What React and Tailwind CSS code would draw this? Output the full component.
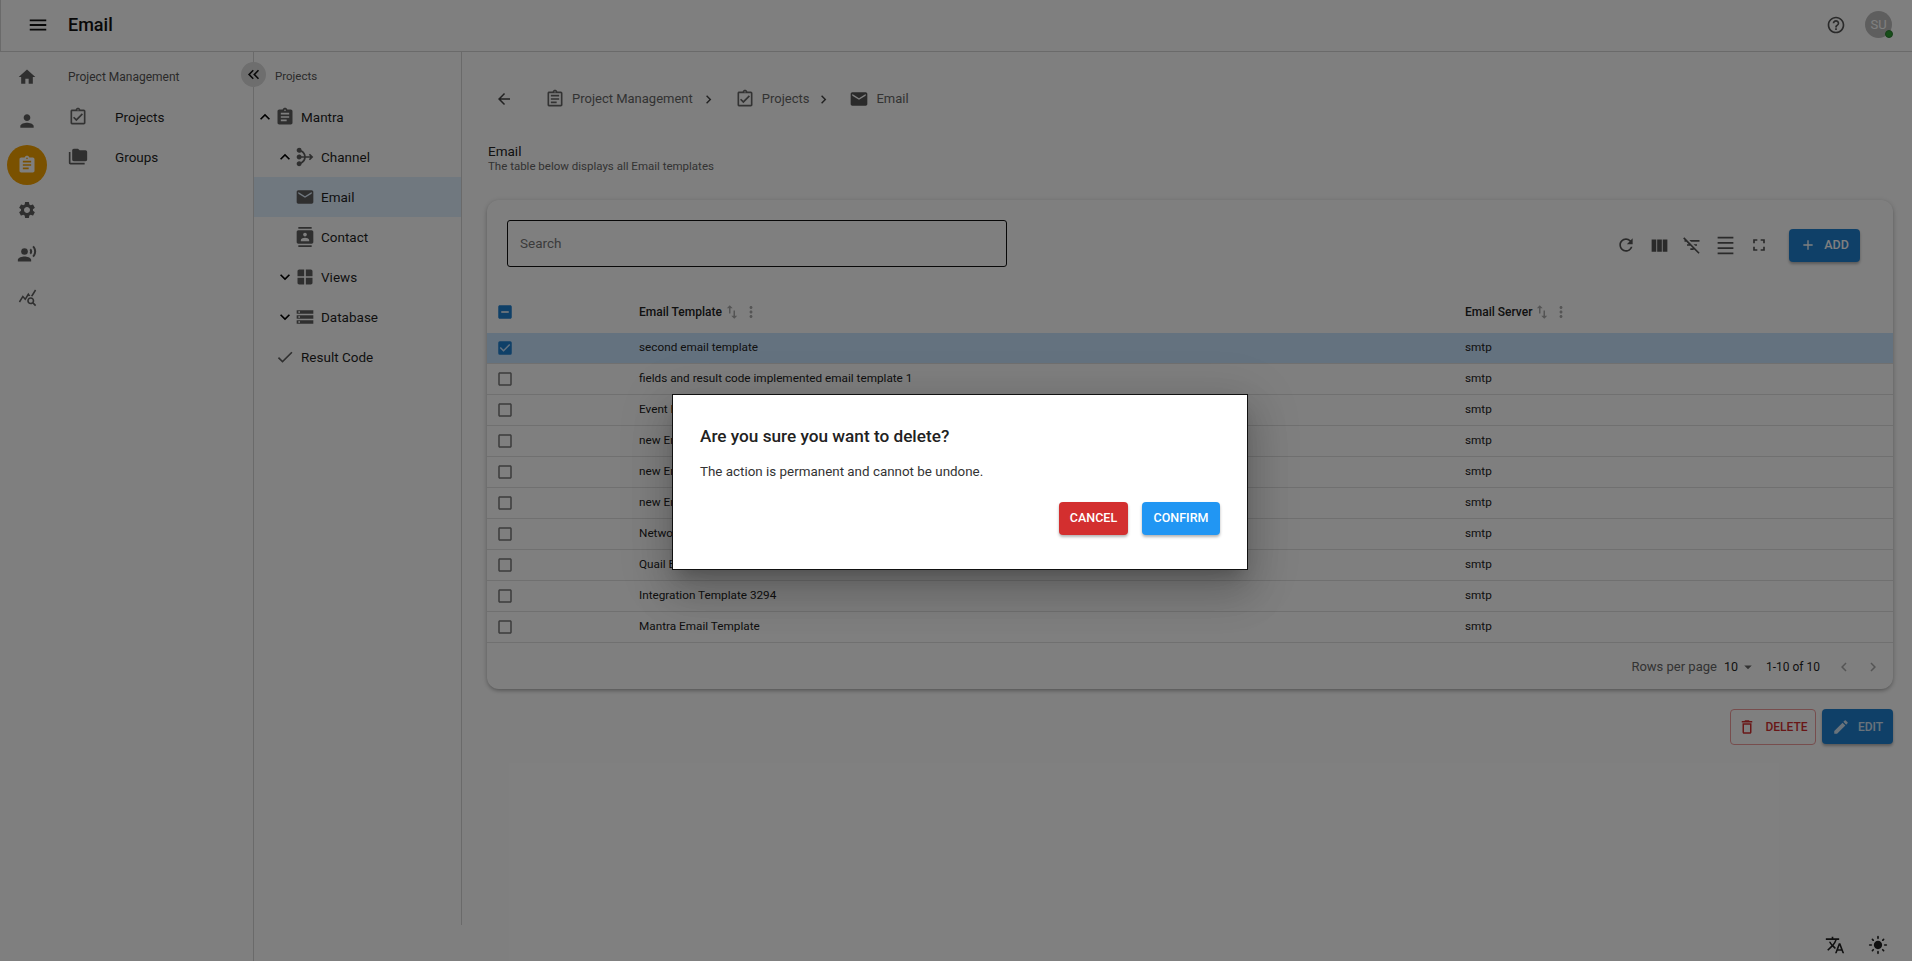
import React from "react";
import {
  MdMenu, MdHome, MdPerson, MdAssignment, MdSettings, MdRecordVoiceOver, MdQueryStats,
  MdKeyboardDoubleArrowLeft, MdOutlineAssignment, MdOutlineAssignmentTurnedIn, MdFolderCopy,
  MdKeyboardArrowUp, MdKeyboardArrowDown, MdMediation, MdEmail, MdContacts, MdWindow, MdStorage,
  MdCheck, MdArrowBack, MdChevronRight, MdChevronLeft, MdHelpOutline, MdRefresh, MdViewColumn,
  MdFilterListOff, MdDensitySmall, MdFullscreen, MdAdd, MdSwapVert, MdMoreVert, MdOutlineDelete,
  MdEdit, MdTranslate, MdLightMode, MdCheckBox, MdIndeterminateCheckBox, MdCheckBoxOutlineBlank,
  MdArrowDropDown,
} from "react-icons/md";

const rail = [MdHome, MdPerson, MdAssignment, MdSettings, MdRecordVoiceOver, MdQueryStats];

const tree = [
  { label: "Mantra", Icon: MdAssignment, chev: "up", pad: "pl-0" },
  { label: "Channel", Icon: MdMediation, chev: "up", pad: "pl-[20px]" },
  { label: "Email", Icon: MdEmail, pad: "pl-[20px]", active: true },
  { label: "Contact", Icon: MdContacts, pad: "pl-[20px]" },
  { label: "Views", Icon: MdWindow, chev: "down", pad: "pl-[20px]" },
  { label: "Database", Icon: MdStorage, chev: "down", pad: "pl-[20px]" },
  { label: "Result Code", Icon: MdCheck, pad: "pl-0" },
];

const rows = [
  "second email template",
  "fields and result code implemented email template 1",
  "Event Email Template",
  "new Email Template 3",
  "new Email Template 2",
  "new Email Template 1",
  "Network Email Template",
  "Quail Email Template",
  "Integration Template 3294",
  "Mantra Email Template",
];

function TreeRow({ label, Icon, chev, pad, active }) {
  const Chevron = chev === "up" ? MdKeyboardArrowUp : MdKeyboardArrowDown;
  return (
    <div className={`h-10 flex items-center ${pad} ${active ? "bg-[#e1f0ff]" : ""}`}>
      <span className="w-5 ml-[1px] flex justify-center">
        {chev ? <Chevron size={20} className="text-black" /> : null}
      </span>
      <span className="w-5 flex justify-center text-[#5f5f5f]">
        <Icon size={20} />
      </span>
      <span className="ml-[6px] text-[13.5px] text-[#1f1f1f]">{label}</span>
    </div>
  );
}

export default function App() {
  return (
    <div className="relative h-[961px] w-[1912px] overflow-hidden bg-white font-['Roboto','Noto_Sans',sans-serif] text-[#1f1f1f]">
      <header className="h-[52px] flex items-center border-b border-l border-[#d4d4d4] pl-[26px] pr-[20px] pb-[2px]">
        <MdMenu size={22} className="text-[#111] mr-[19px]" />
        <h1 className="text-[18px] font-medium text-[#111]">Email</h1>
        <div className="ml-auto flex items-center gap-[19px]">
          <MdHelpOutline size={20} className="text-[#555]" />
          <div className="relative w-[27px] h-[27px] rounded-full bg-[#bdbdbd] flex items-center justify-center text-[13px] text-white">
            SU
            <span className="absolute right-[-1px] bottom-[0px] w-[8px] h-[8px] rounded-full bg-[#2e9e32] border border-[#2e7d32]" />
          </div>
        </div>
      </header>

      <div className="flex h-[909px]">
        <aside className="w-[254px] shrink-0 flex border-r border-[#d4d4d4] relative">
          <nav className="w-[54px] shrink-0 pt-[5px] flex flex-col items-center gap-[4.2px]">
            {rail.map((Icon, i) => (
              <div
                key={i}
                className={`w-10 h-10 rounded-full flex items-center justify-center ${i === 2 ? "bg-[#f5a200] text-white" : "text-[#5f5f5f]"}`}
              >
                <Icon size={i === 5 ? 19 : 20} />
              </div>
            ))}
          </nav>
          <div className="flex-1 pt-[5px] pl-[14px]">
            <div className="h-10 flex items-center text-[12px] text-[#555]">Project Management</div>
            <div className="h-10 flex items-center text-[13.5px]">
              <MdOutlineAssignmentTurnedIn size={20} className="text-[#666] w-5" />
              <span className="ml-[27px]">Projects</span>
            </div>
            <div className="h-10 flex items-center text-[13.5px]">
              <MdFolderCopy size={20} className="text-[#5f5f5f] w-5" />
              <span className="ml-[27px]">Groups</span>
            </div>
          </div>
          <div className="absolute right-[-13px] top-[10px] w-[25px] h-[25px] rounded-full bg-[#dcdcdc] flex items-center justify-center">
            <MdKeyboardDoubleArrowLeft size={19} className="text-[#111]" />
          </div>
        </aside>

        <section className="w-[208px] shrink-0 h-[873px] border-r border-[#d4d4d4] pt-[5px]">
          <div className="h-10 flex items-center pl-[21px] text-[11.5px] text-[#555]">Projects</div>
          {tree.map((t) => (
            <TreeRow key={t.label} {...t} />
          ))}
        </section>

        <main className="flex-1 min-w-0 pl-[25px] pr-[19px]">
          <div className="h-6 mt-[35px] flex items-center text-[13px] text-[#666]">
            <MdArrowBack size={18} className="text-[#444] ml-[8px] mr-[32px]" />
            <MdOutlineAssignment size={20} className="text-[#666] mr-[7px]" />
            <span>Project Management</span>
            <MdChevronRight size={17} className="text-[#444] mx-[7px]" />
            <MdOutlineAssignmentTurnedIn size={20} className="text-[#666] ml-[11px] mr-[5px]" />
            <span className="ml-[2px]">Projects</span>
            <MdChevronRight size={17} className="text-[#444] mx-[6px]" />
            <MdEmail size={20} className="text-[#555] ml-[11px] mr-[5px]" />
            <span className="ml-[2px]">Email</span>
          </div>

          <div className="mt-[33px] ml-[1px] text-[13.5px] leading-[15px] text-[#222]">Email</div>
          <div className="ml-[1px] text-[11.5px] leading-[14px] text-[#666]">The table below displays all Email templates</div>

          <div className="mt-[27px] h-[489px] rounded-[12px] bg-white shadow-[0_2px_4px_-1px_rgba(0,0,0,0.3),0_1px_6px_rgba(0,0,0,0.14)]">
            <div className="h-[90px] pt-[20px] pl-[20px] pr-[33px] flex items-start">
              <div className="w-[500px] h-[47px] border border-[#111] rounded-[3px] flex items-center pl-[12px] text-[13.5px] text-[#777]">Search</div>
              <div className="ml-auto flex items-center h-[42px] mt-[4px] text-[#555]">
                <MdRefresh size={20} className="mr-[13px]" />
                <MdViewColumn size={21} className="mr-[12px]" />
                <MdFilterListOff size={20} className="mr-[13px]" />
                <MdDensitySmall size={21} className="mr-[13px]" />
                <MdFullscreen size={20} className="mr-[20px]" />
                <button className="w-[71px] h-[33px] rounded-[4px] bg-[#1f80d0] text-white text-[12.5px] font-medium flex items-center justify-center gap-[8px] shadow-[0_2px_3px_rgba(0,0,0,0.3)]">
                  <MdAdd size={16} />
                  ADD
                </button>
              </div>
            </div>

            <div className="h-[43px] grid grid-cols-[152px_826px_1fr] items-center text-[12px] font-medium text-[#222]">
              <div className="pl-[9px] flex">
                <MdIndeterminateCheckBox size={18} className="text-[#1f80d0]" />
              </div>
              <div className="flex items-center">
                Email Template
                <MdSwapVert size={18} className="text-[#aaa] ml-[1px]" />
                <MdMoreVert size={18} className="text-[#aaa] ml-[1px]" />
              </div>
              <div className="flex items-center">
                Email Server
                <MdSwapVert size={18} className="text-[#aaa] ml-[1px]" />
                <MdMoreVert size={18} className="text-[#aaa] ml-[1px]" />
              </div>
            </div>

            {rows.map((name, i) => (
              <div
                key={name}
                className={`h-[31px] grid grid-cols-[152px_826px_1fr] items-center border-b border-[#e0e0e0] text-[11.75px] text-[#222] ${i === 0 ? "bg-[#c9e4ff]" : ""}`}
              >
                <div className="pl-[9px] flex">
                  {i === 0 ? (
                    <MdCheckBox size={18} className="text-[#1f80d0]" />
                  ) : (
                    <MdCheckBoxOutlineBlank size={18} className="text-[#777]" />
                  )}
                </div>
                <div>{name}</div>
                <div>smtp</div>
              </div>
            ))}

            <div className="h-[45px] pt-[3px] flex items-center justify-end pr-[11px] text-[13px]">
              <span className="text-[#666]">Rows per page</span>
              <span className="ml-[7px] text-[12.5px]">10</span>
              <MdArrowDropDown size={18} className="text-[#666] ml-[1px]" />
              <span className="ml-[9px] text-[12px]">1-10 of 10</span>
              <MdChevronLeft size={18} className="text-[#aaa] ml-[15px]" />
              <MdChevronRight size={18} className="text-[#aaa] ml-[11px]" />
            </div>
          </div>

          <div className="mt-[20px] flex justify-end items-start gap-[6px]">
            <button className="w-[86px] h-[36px] rounded-[4px] border border-[#ef9a9a] text-[#d32f2f] text-[12px] font-medium flex items-center justify-center gap-[9px]">
              <MdOutlineDelete size={18} />
              DELETE
            </button>
            <button className="w-[71px] h-[35px] rounded-[4px] bg-[#1f80d0] text-white/80 text-[12px] font-medium flex items-center justify-center gap-[8px] shadow-[0_2px_3px_rgba(0,0,0,0.3)]">
              <MdEdit size={18} />
              EDIT
            </button>
          </div>
        </main>
      </div>

      <div className="absolute right-[24px] top-[935px] flex items-center gap-[23px] text-[#222]">
        <MdTranslate size={20} />
        <MdLightMode size={20} />
      </div>

      <div className="absolute inset-0 bg-black/50" />

      <div className="absolute left-[672px] top-[394px] w-[576px] h-[176px] bg-white border border-[#111] pl-[27px] pr-[27px] pt-[29px] shadow-[0_11px_15px_-7px_rgba(0,0,0,0.2),0_24px_38px_3px_rgba(0,0,0,0.14),0_9px_46px_8px_rgba(0,0,0,0.12)]">
        <h2 className="text-[17.2px] leading-[24px] font-medium text-[#222]">Are you sure you want to delete?</h2>
        <p className="mt-[14px] text-[13.4px] leading-[20px] text-[#333]">The action is permanent and cannot be undone.</p>
        <div className="mt-[20px] flex justify-end gap-[14px]">
          <button className="w-[69px] h-[33px] rounded-[4px] bg-[#d32f2f] text-white text-[12.5px] font-medium shadow-[0_2px_3px_rgba(0,0,0,0.3)]">CANCEL</button>
          <button className="w-[78px] h-[33px] rounded-[4px] bg-[#2196f3] text-white text-[12.5px] font-medium shadow-[0_2px_3px_rgba(0,0,0,0.3)]">CONFIRM</button>
        </div>
      </div>
    </div>
  );
}
